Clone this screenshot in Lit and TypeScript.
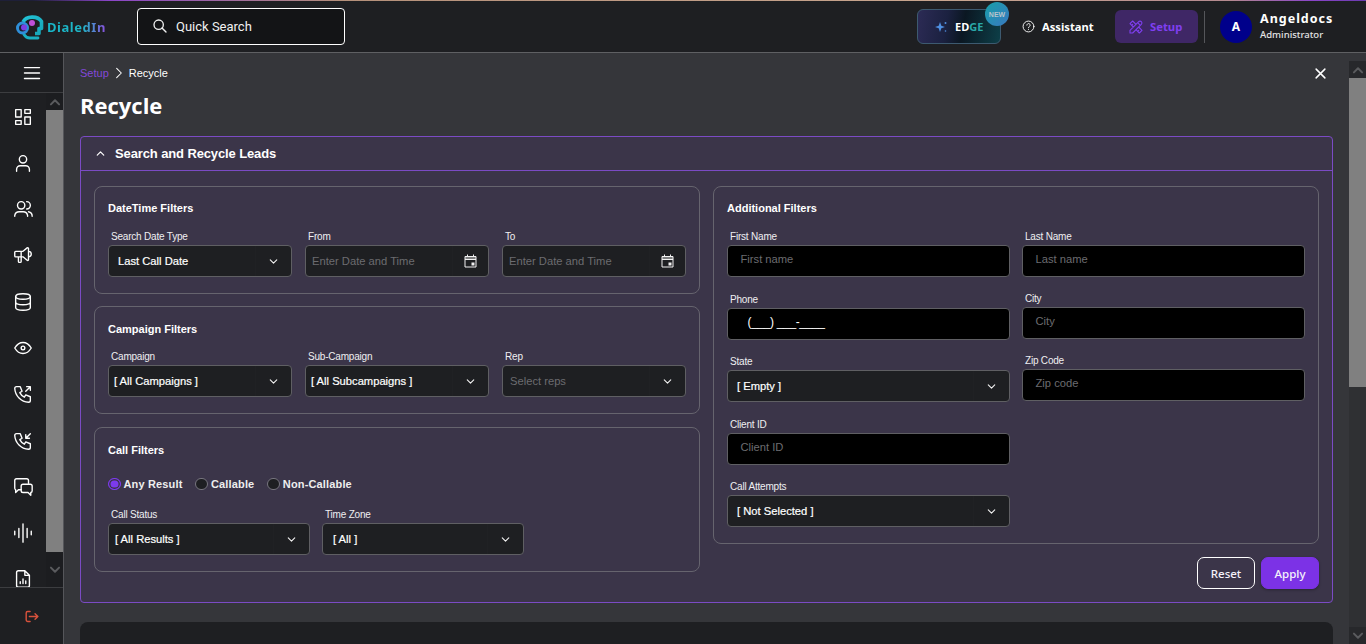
import { LitElement, html, css, svg } from "lit";
import { customElement } from "lit/decorators.js";

// --- Icons ---

const icon = (body: unknown, size = 20, sw = 1.6) => html`<svg
  width=${size}
  height=${size}
  viewBox="0 0 24 24"
  fill="none"
  stroke="currentColor"
  stroke-width=${sw}
  stroke-linecap="round"
  stroke-linejoin="round"
>
  ${body}
</svg>`;

const PHONE = "M5 4h4l2 5l-2.5 1.5a11 11 0 0 0 5 5l1.5 -2.5l5 2v4a2 2 0 0 1 -2 2a16 16 0 0 1 -15 -15a2 2 0 0 1 2 -2";

const NAV_ICONS = [
  svg`<path d="M4 4h6v8h-6z M4 16h6v4h-6z M14 12h6v8h-6z M14 4h6v4h-6z" />`,
  svg`<circle cx="12" cy="8" r="4" /><path d="M5 21v-2a4 4 0 0 1 4-4h6a4 4 0 0 1 4 4v2" />`,
  svg`<circle cx="10" cy="8" r="4" /><path d="M3 20v-1a5 5 0 0 1 5-4h4a5 5 0 0 1 5 4v1 M16 4a4 4 0 0 1 0 8 M18 15a5 5 0 0 1 4 5" />`,
  svg`<path d="M18 8a3 3 0 0 1 0 6 M10 8v11a1 1 0 0 1 -1 1h-1a1 1 0 0 1 -1 -1v-5 M12 8l4.524 -3.77a.9 .9 0 0 1 1.476 .692v12.156a.9 .9 0 0 1 -1.476 .692l-4.524 -3.77h-8a1 1 0 0 1 -1 -1v-4a1 1 0 0 1 1 -1h8" />`,
  svg`<ellipse cx="12" cy="6" rx="8" ry="3" /><path d="M4 6v6a8 3 0 0 0 16 0v-6 M4 12v6a8 3 0 0 0 16 0v-6" />`,
  svg`<path d="M10 12a2 2 0 1 0 4 0a2 2 0 0 0 -4 0 M21 12c-2.4 4 -5.4 6 -9 6c-3.6 0 -6.6 -2 -9 -6c2.4 -4 5.4 -6 9 -6c3.6 0 6.6 2 9 6" />`,
  svg`<path d="${PHONE} M15 9l5 -5 M16 4h4v4" />`,
  svg`<path d="${PHONE} M15 5v4h4 M15 9l5 -5" />`,
  svg`<path d="M10 15H7l-3 3v-3a2 2 0 0 1-1-2V5a2 2 0 0 1 2-2h11a2 2 0 0 1 2 2v3" /><path d="M12 9h8a2 2 0 0 1 2 2v5a2 2 0 0 1-1.5 2v3l-3-3H12a2 2 0 0 1-2-2v-5a2 2 0 0 1 2-2z" />`,
  svg`<path d="M3 10v4 M7.5 7v10 M12 2v20 M16.5 7v10 M21 10v4" />`,
  svg`<path d="M14 3H7a2 2 0 0 0-2 2v14a2 2 0 0 0 2 2h10a2 2 0 0 0 2-2V8z M14 3v5h5 M9 17v-2 M12 17v-5 M15 17v-3" />`,
];

const CHEVRON = icon(svg`<path d="M6 9l6 6l6 -6" />`, 13, 2);
const CALENDAR = html`<svg width="13" height="14" viewBox="0 0 13 14" fill="none" stroke="currentColor">
  <path d="M1 2.5h11v10.5h-11z" />
  <path d="M1 2.5h11v2.5h-11z" fill="currentColor" fill-opacity=".45" stroke="none" />
  <path d="M1 5.5h11 M3.5 .5v2 M9.5 .5v2" />
  <rect x="7.5" y="8.5" width="3" height="3" fill="currentColor" stroke="none" />
</svg>`;
const LOGO = html`<svg width="30" height="27" viewBox="0 0 30 27" fill="none">
  <defs>
    <linearGradient id="lg" x1="0" y1="0" x2="1" y2="1">
      <stop offset="0" stop-color="#22c3d6" />
      <stop offset="1" stop-color="#17a5b8" />
    </linearGradient>
  </defs>
  <path d="M8 9a10 7.5 0 0 1 18.5 -.5v7h-2.5v5h-4" stroke="url(#lg)" stroke-width="3.6" stroke-linejoin="round" />
  <path d="M9 21.5q2 3.5 6 3.5h8" stroke="#19b0c2" stroke-width="2.8" stroke-linecap="round" />
  <circle cx="7.5" cy="15" r="5" fill="#1f1f30" stroke="#2f8fd8" stroke-width="3" />
  <circle cx="9" cy="14.5" r="3" fill="#7b3fe0" />
  <circle cx="17" cy="10" r="3" fill="#c050d8" />
</svg>`;

// --- Field helpers ---

const dropdown = (label: string, value: string, pad = 9, placeholder = false) => html`
  <div class="field">
    <label>${label}</label>
    <div class="control select">
      <span class=${placeholder ? "ph" : "val"} style="padding-left:${pad}px">${value}</span>
      <i class="addon">${CHEVRON}</i>
    </div>
  </div>
`;

const dateField = (label: string) => html`
  <div class="field">
    <label>${label}</label>
    <div class="control select">
      <span class="ph" style="padding-left:6px">Enter Date and Time</span>
      <i class="addon">${CALENDAR}</i>
    </div>
  </div>
`;

const textField = (label: string, placeholder: string) => html`
  <div class="field">
    <label>${label}</label>
    <div class="control input"><span class="ph">${placeholder}</span></div>
  </div>
`;

@customElement("app-root")
export class AppRoot extends LitElement {
  static styles = css`
    :host {
      display: block;
      height: 644px;
      overflow: hidden;
      background: #35363a;
      color: #fff;
      font-family: "Liberation Sans", Arial, sans-serif;
    }
    * {
      box-sizing: border-box;
    }
    .accent-line {
      height: 1px;
      background: linear-gradient(90deg, #1e1f38 0, #1e1f38 2.4%, #8a45c8 8%, #b5907a 25%, #c9a68f 70%, #b58a90 90%, #8a45c8 96%, #6b3bb0 100%);
    }
    header {
      height: 52px;
      background: #1e1f22;
      border-bottom: 1px solid #5f6063;
      display: flex;
      align-items: center;
      padding-left: 15px;
    }
    .logo {
      display: flex;
      align-items: center;
      gap: 2px;
      width: 122px;
    }
    .logo b {
      font: 700 13px "Noto Sans", sans-serif;
      letter-spacing: 0.55px;
      background: linear-gradient(90deg, #17b6c9 0, #1fb5c6 60%, #8d4fe0 100%);
      -webkit-background-clip: text;
      background-clip: text;
      color: transparent;
    }
    .search {
      width: 208px;
      height: 37px;
      border: 1px solid #fff;
      border-radius: 4px;
      background: #131416;
      display: flex;
      align-items: center;
      gap: 8px;
      padding: 0 0 1px 14px;
      font: 400 13px Roboto, sans-serif;
      color: #f1f1f1;
    }
    .spacer {
      flex: 1;
    }
    .edge {
      position: relative;
      width: 84px;
      height: 35px;
      border: 1px solid #3d5a70;
      border-radius: 6px;
      background: linear-gradient(100deg, #2c2b55 0, #1b2140 35%, #0b1722 55%, #0d3f48 100%);
      display: flex;
      align-items: center;
      padding-left: 16px;
      gap: 7px;
      font: 700 11px "Noto Sans", sans-serif;
    }
    .edge em {
      font-style: normal;
      color: #2aa8a8;
    }
    .edge .new {
      position: absolute;
      right: -9px;
      top: -8px;
      width: 24px;
      height: 24px;
      border-radius: 50%;
      background: linear-gradient(135deg, #17a0a8, #3a78c0);
      color: #b8c4cc;
      font: 700 7px "Liberation Sans", sans-serif;
      display: flex;
      align-items: center;
      justify-content: center;
    }
    .assistant {
      display: flex;
      align-items: center;
      gap: 7px;
      margin-left: 21px;
      width: 72px;
      font: 700 11.2px "Noto Sans", sans-serif;
      white-space: nowrap;
    }
    .setup {
      margin-left: 21px;
      width: 83px;
      height: 33px;
      border-radius: 6px;
      background: #3f2766;
      color: #7f3ff0;
      display: flex;
      align-items: center;
      gap: 6px;
      padding-left: 13px;
      font: 700 11.3px "Noto Sans", sans-serif;
    }
    .divider {
      width: 1px;
      height: 32px;
      margin: 0 15px 0 6px;
      background: #55565a;
    }
    .avatar {
      width: 32px;
      height: 32px;
      border-radius: 50%;
      background: #00008b;
      display: flex;
      align-items: center;
      justify-content: center;
      font: 700 12px "Noto Sans", sans-serif;
    }
    .who {
      margin: 0 32px 0 8px;
      width: 74px;
      display: flex;
      flex-direction: column;
      gap: 3px;
    }
    .who b {
      font: 700 12.5px/14px "Noto Sans", sans-serif;
      letter-spacing: 1px;
    }
    .who span {
      font: 500 9.5px/12px "Noto Sans", sans-serif;
      color: #e4e4e4;
    }
    .shell {
      display: flex;
      height: 591px;
    }
    aside {
      width: 64px;
      flex: none;
      background: #1e1f22;
      border-right: 1px solid #55565a;
      display: flex;
      flex-direction: column;
    }
    .burger {
      height: 40px;
      flex: none;
      display: flex;
      align-items: center;
      justify-content: center;
      border-bottom: 1px solid #3c3d40;
    }
    .nav-wrap {
      height: 494px;
      flex: none;
      display: flex;
      overflow: hidden;
    }
    nav {
      width: 46px;
      padding: 12.5px 1px 0 0;
      display: flex;
      flex-direction: column;
      align-items: center;
      gap: 24.3px;
    }
    nav svg {
      display: block;
      flex: none;
    }
    .scrollbar {
      width: 17px;
      display: flex;
      flex-direction: column;
      flex: none;
    }
    .sb-btn {
      height: 17px;
      flex: none;
      display: flex;
      align-items: center;
      justify-content: center;
      color: #5a5b5e;
      background: #27282b;
    }
    .thumb {
      background: #808080;
    }
    .nav-wrap .sb-btn {
      background: #1c1d20;
    }
    .nav-wrap .thumb {
      height: 442px;
      flex: none;
    }
    .nav-wrap .sb-btn.down {
      height: 35px;
    }
    .logout {
      flex: 1;
      border-top: 1px solid #3c3d40;
      display: flex;
      align-items: center;
      justify-content: center;
      color: #d9523c;
    }
    main {
      flex: 1;
      min-width: 0;
      padding: 12px 16px 0;
      overflow: hidden;
    }
    .main-bar {
      margin-top: 8px;
      background: #2f3033;
      height: 583px;
    }
    .main-bar .thumb {
      height: 309px;
      flex: none;
    }
    .main-bar .fill {
      flex: 1;
    }
    .crumb {
      display: flex;
      align-items: center;
      height: 16px;
      font-size: 11px;
      gap: 3px;
      padding-right: 5px;
    }
    .crumb a {
      color: #8348d8;
    }
    .crumb .close {
      margin-left: auto;
      display: flex;
    }
    h1 {
      margin: 8px 0 15px;
      font: 700 22px/32px "Open Sans", sans-serif;
    }
    .panel {
      border: 1px solid #7b4bc4;
      border-radius: 4px;
      background: #3b3549;
    }
    .panel-head {
      height: 34px;
      border-bottom: 1px solid #7b4bc4;
      display: flex;
      align-items: center;
      gap: 8px;
      padding-left: 13px;
      font-size: 13px;
      font-weight: 700;
      letter-spacing: -0.12px;
    }
    .panel-body {
      padding: 15px 13px 13px;
      display: grid;
      grid-template-columns: 606px 606px;
      column-gap: 13px;
      align-items: start;
    }
    .col {
      display: flex;
      flex-direction: column;
    }
    .col.left {
      gap: 12px;
    }
    .card {
      border: 1px solid #66646e;
      border-radius: 8px;
      padding: 13px 13px 16px;
    }
    .card.calls {
      margin-top: 1px;
    }
    h2 {
      margin: 0 0 11px;
      font-size: 11px;
      line-height: 16px;
      font-weight: 700;
    }
    .mid h2 {
      margin: 1px 0 10px;
    }
    .calls h2 {
      margin: 1px 0 0;
    }
    .row3 {
      display: grid;
      grid-template-columns: repeat(3, 184px);
      column-gap: 13px;
    }
    .row2 {
      display: grid;
      grid-template-columns: repeat(2, 202px);
      column-gap: 12px;
    }
    .radios {
      height: 20px;
      margin: 16px 0 11px;
      display: flex;
      align-items: center;
      font-size: 11px;
      font-weight: 700;
      letter-spacing: 0.15px;
      color: #eee;
    }
    .radio {
      display: flex;
      align-items: center;
      gap: 3px;
      margin-right: 13px;
    }
    .dot {
      width: 12.5px;
      height: 12.5px;
      border-radius: 50%;
      border: 1px solid #77757f;
      background: #1e1f22;
    }
    .dot.on {
      border-color: #7c3aed;
      background: #7c3aed;
      box-shadow: inset 0 0 0 1.5px #3b3549;
    }
    .extra {
      display: grid;
      grid-template-columns: 283px 283px;
      column-gap: 12px;
      align-items: start;
    }
    .stack {
      display: flex;
      flex-direction: column;
      gap: 12.5px;
    }
    .stack.tight {
      gap: 12px;
    }
    .field label {
      display: block;
      height: 18px;
      padding: 3px 0 0 3px;
      font-size: 10px;
      line-height: 14px;
      letter-spacing: -0.2px;
      color: #efeff1;
    }
    .control {
      height: 32px;
      border: 1px solid #5f5f63;
      border-radius: 4px;
      display: flex;
      align-items: center;
      font-size: 11.2px;
      white-space: nowrap;
    }
    .control.select {
      background: #1e1f22;
    }
    .control.input {
      background: #000;
      padding: 0 0 3.5px 12.5px;
    }
    .val {
      flex: 1;
      -webkit-text-stroke: 0.2px #fff;
    }
    .ph {
      flex: 1;
      color: #6c6c70;
    }
    .phone {
      color: #fff;
      padding-left: 7px;
      font-size: 12px;
      letter-spacing: -0.35px;
    }
    .addon {
      width: 36px;
      height: 100%;
      flex: none;
      border-left: 1px solid #202124;
      display: flex;
      align-items: center;
      justify-content: center;
      color: #f2f2f2;
    }
    .actions {
      margin-top: 13px;
      display: flex;
      justify-content: flex-end;
      gap: 6px;
    }
    .actions button {
      width: 58px;
      height: 32px;
      border-radius: 7px;
      font: 500 11.5px "Noto Sans", sans-serif;
      color: #f4f1fa;
      background: transparent;
      border: 1px solid #fff;
    }
    .actions .apply {
      background: #7c32e6;
      border-color: #7c32e6;
      box-shadow: 0 1px 3px rgba(0, 0, 0, 0.3);
    }
    .results {
      margin-top: 19px;
      height: 60px;
      background: #1e1f22;
      border-radius: 8px;
    }
  `;

  render() {
    const up = icon(svg`<path d="M5 16l7 -7l7 7" />`, 14, 3.4);
    const down = icon(svg`<path d="M5 8l7 7l7 -7" />`, 14, 3.4);
    return html`
      <div class="accent-line"></div>
      <header>
        <div class="logo">${LOGO}<b>DialedIn</b></div>
        <div class="search">
          ${icon(svg`<circle cx="10" cy="10" r="7" /><path d="M21 21l-6 -6" />`, 16, 2)}
          <span>Quick Search</span>
        </div>
        <div class="spacer"></div>
        <div class="edge">
          <svg width="14" height="14" viewBox="0 0 14 14" fill="#4f8fe0">
            <path d="M6 2l1.3 3.7L11 7 7.3 8.3 6 12 4.7 8.3 1 7l3.7-1.3z" />
            <circle cx="11.5" cy="3" r="1" />
            <circle cx="11.5" cy="11" r=".8" />
          </svg>
          <span>ED<em>GE</em></span>
          <span class="new">NEW</span>
        </div>
        <div class="assistant">
          ${icon(svg`<circle cx="12" cy="12" r="10" /><path d="M9 9.5a3 3 0 1 1 4.5 2.6c-1 .6-1.5 1.2-1.5 2.2 M12 17.5v.1" />`, 13, 1.7)}
          <span>Assistant</span>
        </div>
        <div class="setup">
          ${icon(svg`<path d="M3 21h4l13 -13a1.5 1.5 0 0 0 -4 -4l-13 13v4 M14.5 5.5l4 4 M12 8l-5 -5l-4 4l5 5 M7 8l-1.5 1.5 M16 12l5 5l-4 4l-5 -5 M16 17l-1.5 1.5" />`, 16, 1.6)}
          <span>Setup</span>
        </div>
        <div class="divider"></div>
        <div class="avatar">A</div>
        <div class="who"><b>Angeldocs</b><span>Administrator</span></div>
      </header>
      <div class="shell">
        <aside>
          <div class="burger">${icon(svg`<path d="M3 5.5h18 M3 12h18 M3 18.5h18" />`, 20, 1.7)}</div>
          <div class="nav-wrap">
            <nav>${NAV_ICONS.map((i) => icon(i, 22, 1.5))}</nav>
            <div class="scrollbar">
              <div class="sb-btn">${up}</div>
              <div class="thumb"></div>
              <div class="sb-btn down">${down}</div>
            </div>
          </div>
          <div class="logout">
            ${icon(svg`<path d="M10 5H6.5a2 2 0 0 0-2 2v10a2 2 0 0 0 2 2H10 M9 12h12 M17 8l4 4-4 4" />`, 17, 2)}
          </div>
        </aside>
        <main>
          <div class="crumb">
            <a>Setup</a>
            ${icon(svg`<path d="M8 4l8 8l-8 8" />`, 14, 1.8)}
            <span>Recycle</span>
            <span class="close">${icon(svg`<path d="M5 5l14 14 M19 5l-14 14" />`, 15, 2.4)}</span>
          </div>
          <h1>Recycle</h1>
          <section class="panel">
            <div class="panel-head">
              ${icon(svg`<path d="M6 15l6 -6l6 6" />`, 13, 2.2)}
              <span>Search and Recycle Leads</span>
            </div>
            <div class="panel-body">
              <div class="col left">
                <div class="card">
                  <h2>DateTime Filters</h2>
                  <div class="row3">
                    ${dropdown("Search Date Type", "Last Call Date")}
                    ${dateField("From")} ${dateField("To")}
                  </div>
                </div>
                <div class="card mid">
                  <h2>Campaign Filters</h2>
                  <div class="row3">
                    ${dropdown("Campaign", "[ All Campaigns ]", 5)}
                    ${dropdown("Sub-Campaign", "[ All Subcampaigns ]", 5)}
                    ${dropdown("Rep", "Select reps", 7, true)}
                  </div>
                </div>
                <div class="card calls">
                  <h2>Call Filters</h2>
                  <div class="radios">
                    <span class="radio"><i class="dot on"></i>Any Result</span>
                    <span class="radio"><i class="dot"></i>Callable</span>
                    <span class="radio"><i class="dot"></i>Non-Callable</span>
                  </div>
                  <div class="row2">
                    ${dropdown("Call Status", "[ All Results ]", 6)}
                    ${dropdown("Time Zone", "[ All ]", 10)}
                  </div>
                </div>
              </div>
              <div class="col">
                <div class="card">
                  <h2>Additional Filters</h2>
                  <div class="extra">
                    <div class="stack">
                      ${textField("First Name", "First name")}
                      <div class="field">
                        <label>Phone</label>
                        <div class="control input"><span class="phone">(___) ___-____</span></div>
                      </div>
                      ${dropdown("State", "[ Empty ]")}
                      ${textField("Client ID", "Client ID")}
                      ${dropdown("Call Attempts", "[ Not Selected ]")}
                    </div>
                    <div class="stack tight">
                      ${textField("Last Name", "Last name")}
                      ${textField("City", "City")}
                      ${textField("Zip Code", "Zip code")}
                    </div>
                  </div>
                </div>
                <div class="actions">
                  <button>Reset</button>
                  <button class="apply">Apply</button>
                </div>
              </div>
            </div>
          </section>
          <div class="results"></div>
        </main>
        <div class="scrollbar main-bar">
          <div class="sb-btn">${up}</div>
          <div class="thumb"></div>
          <div class="fill"></div>
          <div class="sb-btn">${down}</div>
        </div>
      </div>
    `;
  }
}
